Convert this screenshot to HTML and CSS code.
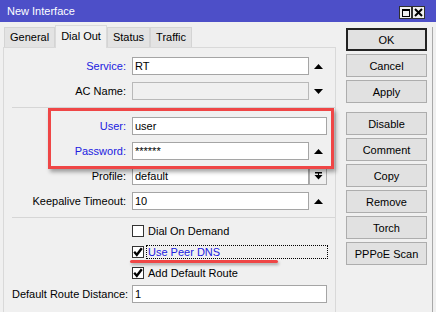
FILE: index.html
```html
<!DOCTYPE html>
<html lang="en">
<head>
    <meta charset="UTF-8">
    <title>New Interface</title>
    <link rel="stylesheet" href="styles.css">
</head>
<body>
    <div class="window">
        <div class="titlebar">
            <span class="title">New Interface</span>
            <div class="title-btns">
                <span class="tbtn"><span class="max-icon"></span></span>
                <span class="tbtn">
                    <svg width="9" height="9" viewBox="0 0 9 9"><path d="M1 1L8 8M8 1L1 8" stroke="#000" stroke-width="2"/></svg>
                </span>
            </div>
        </div>

        <div class="content">
            <div class="main">
                <div class="tabs">
                    <span class="tab">General</span>
                    <span class="tab active">Dial Out</span>
                    <span class="tab">Status</span>
                    <span class="tab">Traffic</span>
                </div>
                <div class="panel">
                    <div class="row">
                        <label class="label blue">Service:</label>
                        <div class="field">RT</div>
                        <span class="spin"><svg width="9" height="5" viewBox="0 0 9 5"><path d="M4.5 0L9 5H0Z"/></svg></span>
                    </div>
                    <div class="row">
                        <label class="label">AC Name:</label>
                        <div class="field disabled"></div>
                        <span class="spin"><svg width="9" height="5" viewBox="0 0 9 5"><path d="M0 0H9L4.5 5Z"/></svg></span>
                    </div>

                    <div class="sep"></div>

                    <div class="row">
                        <label class="label blue">User:</label>
                        <div class="field wide">user</div>
                    </div>
                    <div class="row">
                        <label class="label blue">Password:</label>
                        <div class="field">******</div>
                        <span class="spin"><svg width="9" height="5" viewBox="0 0 9 5"><path d="M4.5 0L9 5H0Z"/></svg></span>
                    </div>
                    <div class="row">
                        <label class="label">Profile:</label>
                        <div class="field">default</div>
                        <span class="spin drop"><svg width="9" height="8" viewBox="0 0 9 8"><path d="M1 0H8V1.5H1Z M4 1.5H5V3H4Z M0.5 3H8.5L4.5 7.5Z"/></svg></span>
                    </div>
                    <div class="row">
                        <label class="label">Keepalive Timeout:</label>
                        <div class="field">10</div>
                        <span class="spin"><svg width="9" height="5" viewBox="0 0 9 5"><path d="M4.5 0L9 5H0Z"/></svg></span>
                    </div>

                    <div class="sep tight"></div>

                    <div class="check-row">
                        <span class="box"></span>
                        <span class="check-text">Dial On Demand</span>
                    </div>
                    <div class="check-row">
                        <span class="box"><svg width="10" height="10" viewBox="0 0 10 10"><path d="M1.2 4.8L3.8 7.8L8.8 1.2" fill="none" stroke="#000" stroke-width="2.3"/></svg></span>
                        <span class="check-text focus blue">Use Peer DNS</span>
                    </div>
                    <div class="check-row">
                        <span class="box"><svg width="10" height="10" viewBox="0 0 10 10"><path d="M1.2 4.8L3.8 7.8L8.8 1.2" fill="none" stroke="#000" stroke-width="2.3"/></svg></span>
                        <span class="check-text">Add Default Route</span>
                    </div>

                    <div class="row last">
                        <label class="label">Default Route Distance:</label>
                        <div class="field wide">1</div>
                    </div>
                </div>
            </div>

            <div class="side">
                <button class="btn default">OK</button>
                <button class="btn">Cancel</button>
                <button class="btn">Apply</button>
                <button class="btn group">Disable</button>
                <button class="btn">Comment</button>
                <button class="btn">Copy</button>
                <button class="btn">Remove</button>
                <button class="btn">Torch</button>
                <button class="btn">PPPoE Scan</button>
            </div>

            <div class="edge"></div>
        </div>

        <div class="mark-box"></div>
        <div class="mark-line"></div>
    </div>
</body>
</html>
```

FILE: styles.css
```css
* {
    margin: 0;
    padding: 0;
    box-sizing: border-box;
}

body {
    font-family: "Liberation Sans", Arial, sans-serif;
    font-size: 11px;
    color: #000;
    background-color: #f0f0f0;
}

.window {
    position: relative;
    width: 436px;
    height: 312px;
    overflow: hidden;
    background-color: #f0f0f0;
}

.titlebar {
    height: 22px;
    background-color: #4d4fc8;
    color: #fff;
    display: flex;
    align-items: center;
    justify-content: space-between;
    padding: 0 11px 0 7px;
}

.title-btns {
    display: flex;
    padding-top: 3px;
}

.tbtn {
    width: 13px;
    height: 13px;
    border: 1px solid #303030;
    background-color: #f0f0f0;
    display: flex;
    align-items: center;
    justify-content: center;
}

.max-icon {
    width: 8px;
    height: 8px;
    border: 1px solid #000;
    border-top-width: 2px;
}

.content {
    display: flex;
    padding-left: 3px;
}

.main {
    width: 333px;
}

.tabs {
    display: flex;
    align-items: flex-end;
    height: 25px;
    padding-left: 1px;
}

.tab {
    height: 20px;
    line-height: 19px;
    padding: 0 5px;
    border: 1px solid #d4d4d4;
    border-bottom: none;
    background-color: #e3e3e3;
}

.tab.active {
    height: 23px;
    line-height: 20px;
    background-color: #f0f0f0;
    border-color: #dadada;
    position: relative;
    top: 1px;
}

.panel {
    height: 270px;
    border: 1px solid #d9d9d9;
    border-bottom: none;
    padding-top: 9px;
}

.row {
    display: flex;
    align-items: center;
    height: 18px;
    margin-bottom: 7px;
}

.label {
    width: 122px;
    margin-right: 6px;
    text-align: right;
    white-space: nowrap;
}

.blue {
    color: #2020e0;
}

.field {
    width: 177px;
    height: 18px;
    border: 1px solid #a5a5a5;
    background-color: #fff;
    padding-left: 2px;
    line-height: 16px;
}

.field.wide {
    width: 195px;
}

.field.disabled {
    background-color: #f0f0f0;
    border-color: #b9b9b9;
}

.spin {
    width: 18px;
    height: 18px;
    display: flex;
    align-items: center;
    justify-content: center;
}

.spin.drop {
    border: 1px solid #adadad;
    background-color: #f0f0f0;
}

.sep {
    height: 1px;
    background-color: #d6d6d6;
    margin: 1px 0 9px 8px;
}

.sep.tight {
    margin: 3px 0 2px 8px;
}

.check-row {
    display: flex;
    align-items: center;
    height: 21px;
    padding-left: 128px;
}

.box {
    width: 12px;
    height: 12px;
    border: 1px solid #333;
    background-color: #fff;
    margin-right: 2px;
    display: flex;
    align-items: center;
    justify-content: center;
}

.check-text {
    border: 1px solid transparent;
    padding: 0 0 0 1px;
    line-height: 12px;
}

.check-text.focus {
    width: 182px;
    border: 1px dotted #000;
    background-color: #f0f0f0;
}

.row.last {
    margin-top: 2px;
}

.row.last .label {
    text-align: left;
    padding-left: 8px;
}

.side {
    display: flex;
    flex-direction: column;
    gap: 3px;
    margin-left: 10px;
    padding-top: 6px;
}

.btn {
    width: 81px;
    height: 23px;
    font-family: inherit;
    font-size: 11px;
    color: #000;
    background-color: #e1e1e1;
    border: 1px solid #adadad;
}

.btn.default {
    border: 2px solid #222;
}

.btn.group {
    margin-top: 6px;
}

.edge {
    width: 1px;
    height: 290px;
    margin: 5px 0 0 5px;
    background-color: #a8a8a8;
}

.mark-box {
    position: absolute;
    left: 48px;
    top: 108px;
    width: 286px;
    height: 61px;
    border: 3px solid #ef4646;
    box-shadow: 2px 3px 4px rgba(0, 0, 0, 0.35);
}

.mark-line {
    position: absolute;
    left: 130px;
    top: 260px;
    width: 148px;
    height: 3px;
    border-radius: 2px;
    background-color: #ef4646;
    box-shadow: 1px 2px 3px rgba(0, 0, 0, 0.3);
}
```
